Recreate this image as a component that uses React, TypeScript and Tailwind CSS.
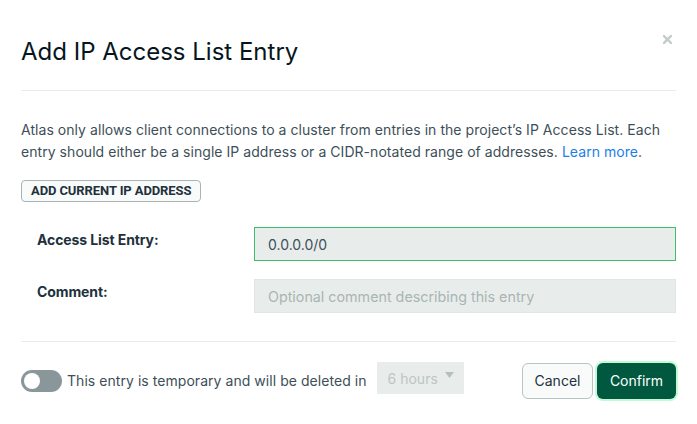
import { useState } from 'react';

const CloseIcon = () => (
  <svg width="9" height="9" viewBox="0 0 9 9" className="mt-[2px]">
    <path d="M1 1 L8 8 M8 1 L1 8" stroke="#c4cccb" strokeWidth="2.4" strokeLinecap="square" />
  </svg>
);

const App: React.FC = () => {
  const [temporary, setTemporary] = useState(false);

  return (
    <div className="w-[697px] h-[424px] bg-white px-[21px] text-[#3d4f58] font-['Inter',sans-serif]">
      {/* Header */}
      <div className="flex items-start justify-between pt-[36px] pb-[22px] border-b border-[#e8edeb]">
        <h1 className="text-[24px] leading-[32px] text-[#061621]">Add IP Access List Entry</h1>
        <button className="mr-[4px] mt-[-3px]">
          <CloseIcon />
        </button>
      </div>

      {/* Body */}
      <p className="mt-[28px] text-[14px] leading-[22px] tracking-[0.05px]">
        Atlas only allows client connections to a cluster from entries in the project’s IP Access List. Each
        entry should either be a single IP address or a CIDR-notated range of addresses.{' '}
        <a className="text-[#1a7fe8]">Learn more</a>.
      </p>

      <button className="mt-[17px] h-[22px] px-[9px] rounded-[4px] border border-[#a8b3b3] bg-[#f9fbfa] text-[13px] font-bold uppercase text-[#21313c] tracking-[-0.1px] font-['Roboto',sans-serif]">
        Add current IP address
      </button>

      <div className="mt-[25px] flex flex-col gap-[18px] pb-[28px] border-b border-[#e8edeb]">
        <div className="flex items-start">
          <label className="w-[233px] pl-[16px] pt-[2px] text-[14px] tracking-[-0.1px] font-bold text-[#21313c]">Access List Entry:</label>
          <input
            className="flex-1 h-[34px] px-[13px] bg-[#e8edeb] border border-[#3fbf6e] text-[14px] text-[#3d4f58] outline-none"
            defaultValue="0.0.0.0/0"
          />
        </div>
        <div className="flex items-start">
          <label className="w-[233px] pl-[16px] pt-[2px] text-[14px] tracking-[-0.1px] font-bold text-[#21313c]">Comment:</label>
          <input
            className="flex-1 h-[34px] px-[13px] bg-[#e8edeb] border border-[#e0e6e4] text-[14.3px] text-[#3d4f58] placeholder:text-[#aab5b3] outline-none"
            placeholder="Optional comment describing this entry"
          />
        </div>
      </div>

      {/* Footer */}
      <div className="mt-[20px] flex items-center">
        <button
          onClick={() => setTemporary(!temporary)}
          className={`w-[41px] h-[22px] rounded-full p-[3px] flex ${temporary ? 'bg-[#13aa52] justify-end' : 'bg-[#89979b] justify-start'}`}
        >
          <span className="w-[16px] h-[16px] rounded-full bg-white" />
        </button>
        <span className="ml-[5px] text-[14px] tracking-[0.05px]">This entry is temporary and will be deleted in</span>
        <div className="ml-[10px] mb-[5px] w-[87px] h-[32px] bg-[#e8edeb] flex items-start justify-between pl-[11px] pr-[10px] pt-[6px] text-[14px] text-[#bcc6c4]">
          <span>6 hours</span>
          <svg width="9" height="6" viewBox="0 0 9 6" className="mt-[4px]">
            <path d="M0 0 H9 L4.5 6 Z" fill="#b4c0be" />
          </svg>
        </div>
        <div className="ml-auto flex items-center gap-[4px]">
          <button className="w-[71px] h-[36px] rounded-[6px] border border-[#b8c4c2] bg-[#f9fbfa] text-[14px] text-[#21313c]">
            Cancel
          </button>
          <button className="w-[79px] h-[36px] rounded-[6px] bg-[#00593f] text-[14px] text-white ring-[2px] ring-[#c0fad6]">
            Confirm
          </button>
        </div>
      </div>
    </div>
  );
};

export default App;
